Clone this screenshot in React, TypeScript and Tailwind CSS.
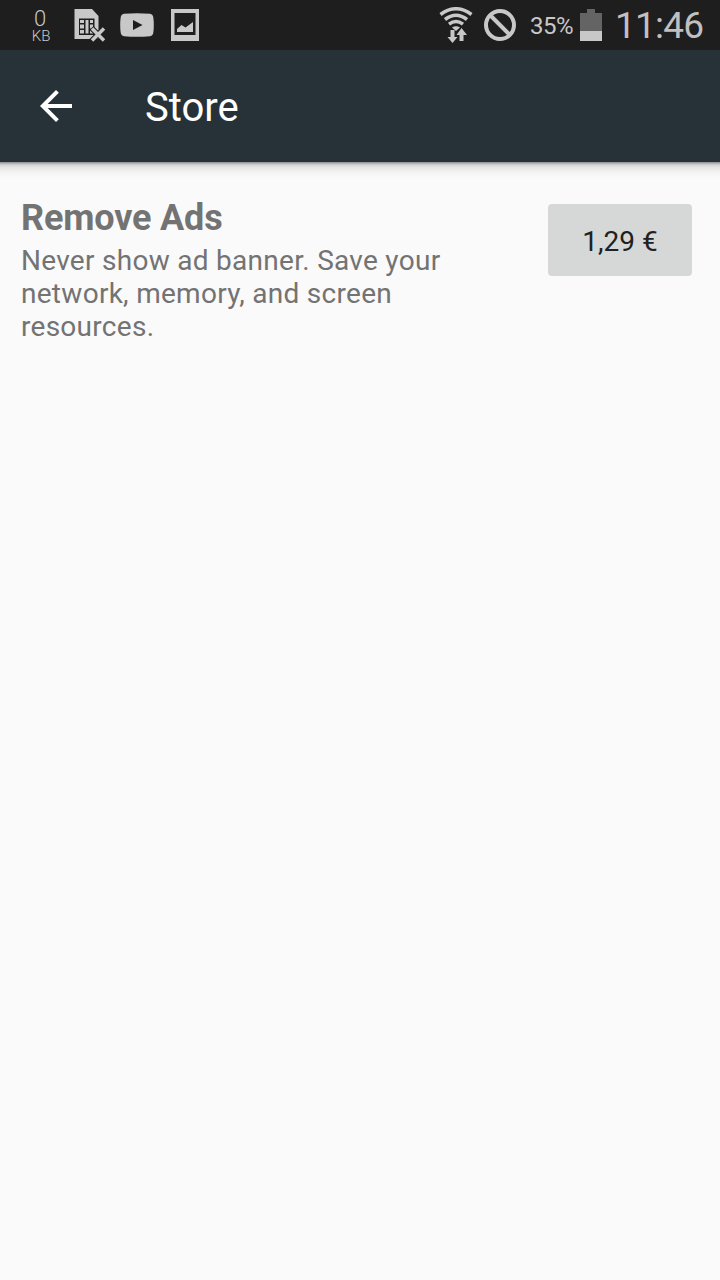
const SimErrorIcon = () => (
  <svg className="ml-[23px] h-[34px] w-8 shrink-0" viewBox="0 0 32 34">
    <path d="M.5 1H18l6.500 7v23H.5z" fill="#c8c8c8" />
    <path d="M5 10.500h15.500V27H5z" fill="#1e1e1e" />
    <path d="M6 12h4v3H6zM6 16.500h4v4H6zM6 22h4v3.500H6zM11.500 12h3v13.500h-3zM16 12h3v3h-3zM16 16.500h3v4h-3zM16 22h3v3.500h-3z" fill="#c8c8c8" />
    <path d="M17.500 20l13 13M30.500 20l-13 13" stroke="#1e1e1e" strokeWidth="5.500" />
    <path d="M18 20.500l12 12M30 20.500l-12 12" stroke="#c8c8c8" strokeWidth="3.500" />
  </svg>
);

const VideoIcon = () => (
  <svg className="ml-[14px] h-6 w-[34px] shrink-0" viewBox="0 0 34 24">
    <path d="M4 .8Q17-.4 30 .8 33 1.200 33.400 5q.8 7 0 14-.4 3.800-3.400 4.200-13 1.200-26 0Q1 22.800.6 19q-.8-7 0-14Q1 1.200 4 .8z" fill="#c8c8c8" />
    <path d="M13 7l9.500 5L13 17z" fill="#1e1e1e" />
  </svg>
);

const PictureIcon = () => (
  <svg className="ml-[17px] h-8 w-7 shrink-0" viewBox="0 0 28 32">
    <path d="M0 0h28v32H0z" fill="#c8c8c8" />
    <path d="M3.500 4h21v22h-21z" fill="#1e1e1e" />
    <path d="M6 23v-3l4.500-4 4 2.500L22 13v10z" fill="#c8c8c8" />
  </svg>
);

const WifiIcon = () => (
  <svg className="h-9 w-[34px] shrink-0" viewBox="0 0 34 36" fill="none">
    <g stroke="#c8c8c8" strokeWidth="3.500">
      <path d="M1.500 7.500Q17-4 32.500 7.500" />
      <path d="M6 12.500q11-8.500 22 0" />
      <path d="M10 17.200q7-5.400 14 0" />
    </g>
    <path d="M13 20.500q4-2.600 8 0L17 24z" fill="#c8c8c8" />
    <path d="M11.500 23h4v7h3l-5 6-5-6h3zM20.500 34h4v-6h3.500l-5.500-7-5 7h3z" fill="#c8c8c8" />
  </svg>
);

const BlockedIcon = () => (
  <svg className="ml-[11px] h-8 w-8 shrink-0" viewBox="0 0 32 32" fill="none" stroke="#c8c8c8" strokeWidth="4">
    <circle cx="16" cy="16" r="14" />
    <path d="M6 6l20 20" />
  </svg>
);

const BatteryIcon = () => (
  <svg className="ml-[7px] h-8 w-[22px] shrink-0" viewBox="0 0 22 32">
    <path d="M7 0h8v4h7v18H0V4h7z" fill="#646464" />
    <path d="M0 22h22v10H0z" fill="#c8c8c8" />
  </svg>
);

const StatusBar = () => (
  <div className="flex h-[50px] items-center bg-[#1e1e1e] text-[#c8c8c8]">
    <div className="ml-[31px] flex w-5 flex-col items-center pt-0.5">
      <span className="mr-0.5 text-[22px] leading-[20px] font-light">0</span>
      <span className="text-[15px] leading-[15px] font-light">KB</span>
    </div>
    <SimErrorIcon />
    <VideoIcon />
    <PictureIcon />
    <div className="ml-auto flex items-center pr-4">
      <WifiIcon />
      <BlockedIcon />
      <span className="ml-[14px] w-[43px] pt-0.5 text-[24px] leading-8 tracking-[-0.5px] whitespace-nowrap">35%</span>
      <BatteryIcon />
      <span className="ml-[13px] w-[89px] pt-px text-[37px] leading-[49px] tracking-[-0.8px] whitespace-nowrap text-[#c0c0c0]">11:46</span>
    </div>
  </div>
);

const Toolbar = () => (
  <header>
    <div className="flex h-28 items-center bg-[#263238] text-white">
      <button className="ml-8 flex h-12 w-12 items-center justify-center" aria-label="Back">
        <svg className="h-12 w-12" viewBox="0 0 24 24" fill="currentColor">
          <path d="M20 11H7.830l5.590-5.590L12 4l-8 8 8 8 1.410-1.410L7.830 13H20v-2z" />
        </svg>
      </button>
      <h1 className="ml-[65px] pt-1 text-[40px] leading-[48px]">Store</h1>
    </div>
    {/* Toolbar shadow */}
    <div className="h-4 bg-[linear-gradient(to_bottom,#8a8c8d_0,#b4b4b4_1.5px,#d4d4d4_3px,#e4e4e4_5px,#f3f3f3_10px,#fafafa_16px)]" />
  </header>
);

const App = () => {
  return (
    <div className="flex min-h-screen w-[720px] flex-col overflow-hidden bg-[#fafafa] font-[Roboto,sans-serif]">
      <StatusBar />
      <Toolbar />

      {/* Purchasable items */}
      <main className="flex items-start justify-between pr-7 pl-[21px]">
        <div className="w-[440px] pt-[19px] text-[#737373]">
          <h2 className="text-[36px] leading-[42px] font-bold tracking-[-0.15px]">Remove Ads</h2>
          <p className="mt-[5px] text-[28px] leading-[33px] tracking-[0.28px]">Never show ad banner. Save your network, memory, and screen resources.</p>
        </div>
        <button className="mt-[26px] h-[72px] w-36 rounded-[4px] bg-[#d6d7d7] pt-[3px] text-[28px] text-[#212121]">1,29 €</button>
      </main>
    </div>
  );
};

export default App;
